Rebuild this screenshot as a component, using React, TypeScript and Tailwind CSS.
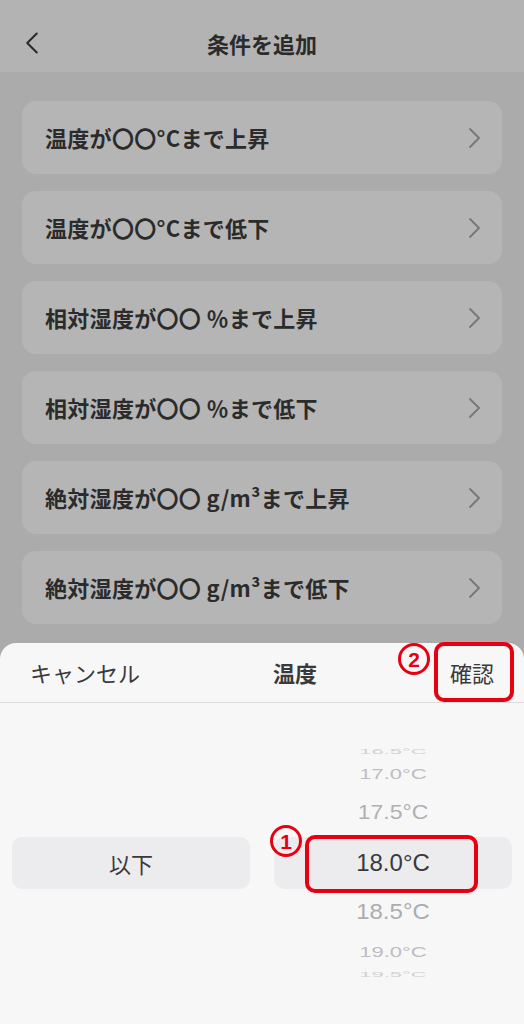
import { ChevronLeft } from "lucide-react";

const conditions = [
  "温度が〇〇°Cまで上昇",
  "温度が〇〇°Cまで低下",
  "相対湿度が〇〇 ％まで上昇",
  "相対湿度が〇〇 ％まで低下",
  "絶対湿度が〇〇 g/m³まで上昇",
  "絶対湿度が〇〇 g/m³まで低下",
];

const jp = { fontFamily: '"Noto Sans CJK JP", "Noto Sans", sans-serif' };
const num = { fontFamily: '"Liberation Sans", Arial, sans-serif' };

const CircleNum: React.FC<{ n: string; className?: string }> = ({ n, className }) => (
  <div
    className={`absolute w-[32px] h-[32px] rounded-full border-[3.5px] border-[#e60012] flex items-center justify-center text-[#e60012] text-[21px] font-bold leading-none ${className ?? ""}`}
    style={num}
  >
    {n}
  </div>
);

const RowChevron = () => (
  <svg width="14" height="24" viewBox="0 0 14 24" fill="none" className="shrink-0">
    <polyline points="2,3 11,12 2,21" stroke="#767676" strokeWidth="1.8" strokeLinecap="round" strokeLinejoin="round" />
  </svg>
);

const App: React.FC = () => {
  return (
    <div className="w-[524px] h-[1024px] overflow-hidden bg-[#ababab] flex flex-col" style={jp}>
      {/* header */}
      <div className="h-[72px] shrink-0 bg-[#b3b3b3] relative flex items-center justify-center pt-[14px]">
        <ChevronLeft className="absolute left-[13px] top-[24px] w-[38px] h-[38px] text-[#2b2b2b]" strokeWidth={1.3} />
        <span className="text-[22px] font-semibold text-[#2b2b2b]">条件を追加</span>
      </div>

      {/* list */}
      <div className="flex flex-col gap-[17px] px-[22px] pt-[29px]">
        {conditions.map((c) => (
          <div key={c} className="h-[73px] rounded-[14px] bg-[#b5b5b5] flex items-center justify-between pl-[23px] pr-[20px]">
            <span className="text-[22px] font-semibold text-[#2b2b2b] tracking-[0.3px] whitespace-pre">{c}</span>
            <RowChevron />
          </div>
        ))}
      </div>

      {/* bottom sheet */}
      <div className="mt-auto h-[381px] shrink-0 bg-[#f7f7f7] rounded-t-[16px] flex flex-col">
        <div className="h-[60px] shrink-0 border-b border-[#dcdcdc] flex items-center">
          <span className="pl-[30px] w-[140px] text-[22px] text-[#3a3a3c]">キャンセル</span>
          <span className="flex-1 text-center text-[22px] font-semibold text-[#3a3a3c]">温度</span>
          <div className="relative mr-[30px]">
            <span className="text-[22px] text-[#3a3a3c]">確認</span>
            <div className="absolute left-[-16px] top-[-14px] w-[80px] h-[60px] rounded-[10px] border-[4px] border-[#e60012]" />
            <CircleNum n="2" className="left-[-52px] top-[-13px]" />
          </div>
        </div>

        <div className="flex gap-[24px] px-[12px]">
          <div className="flex-1 pt-[134px]">
            <div className="h-[52px] rounded-[10px] bg-[#ececee] flex items-center justify-center text-[22px] text-[#3a3a3c]">
              以下
            </div>
          </div>

          <div className="flex-1 pt-[40px] flex flex-col items-stretch" style={num}>
            <div className="h-[16px] flex items-center justify-center">
              <span className="text-[22px] text-[#d0d0d4] scale-y-[0.3]">16.5°C</span>
            </div>
            <div className="h-[28px] flex items-center justify-center">
              <span className="text-[22px] text-[#bdbdc1] scale-y-[0.68]">17.0°C</span>
            </div>
            <div className="h-[50px] flex items-center justify-center">
              <span className="text-[23px] text-[#b0b0b4] scale-y-[0.86]">17.5°C</span>
            </div>
            <div className="relative h-[52px] rounded-[10px] bg-[#ececee] flex items-center justify-center">
              <span className="text-[24px] text-[#3a3a3c]">18.0°C</span>
              <div className="absolute left-[31px] top-[-2px] w-[173px] h-[58px] rounded-[10px] border-[4px] border-[#e60012]" />
              <CircleNum n="1" className="left-[-4px] top-[-12px]" />
            </div>
            <div className="h-[46px] flex items-center justify-center">
              <span className="text-[24px] text-[#acacb0] scale-y-[0.9]">18.5°C</span>
            </div>
            <div className="h-[32px] flex items-center justify-center">
              <span className="text-[22px] text-[#bdbdc1] scale-y-[0.68]">19.0°C</span>
            </div>
            <div className="h-[14px] flex items-center justify-center">
              <span className="text-[22px] text-[#d0d0d4] scale-y-[0.3]">19.5°C</span>
            </div>
          </div>
        </div>
      </div>
    </div>
  );
};

export default App;
